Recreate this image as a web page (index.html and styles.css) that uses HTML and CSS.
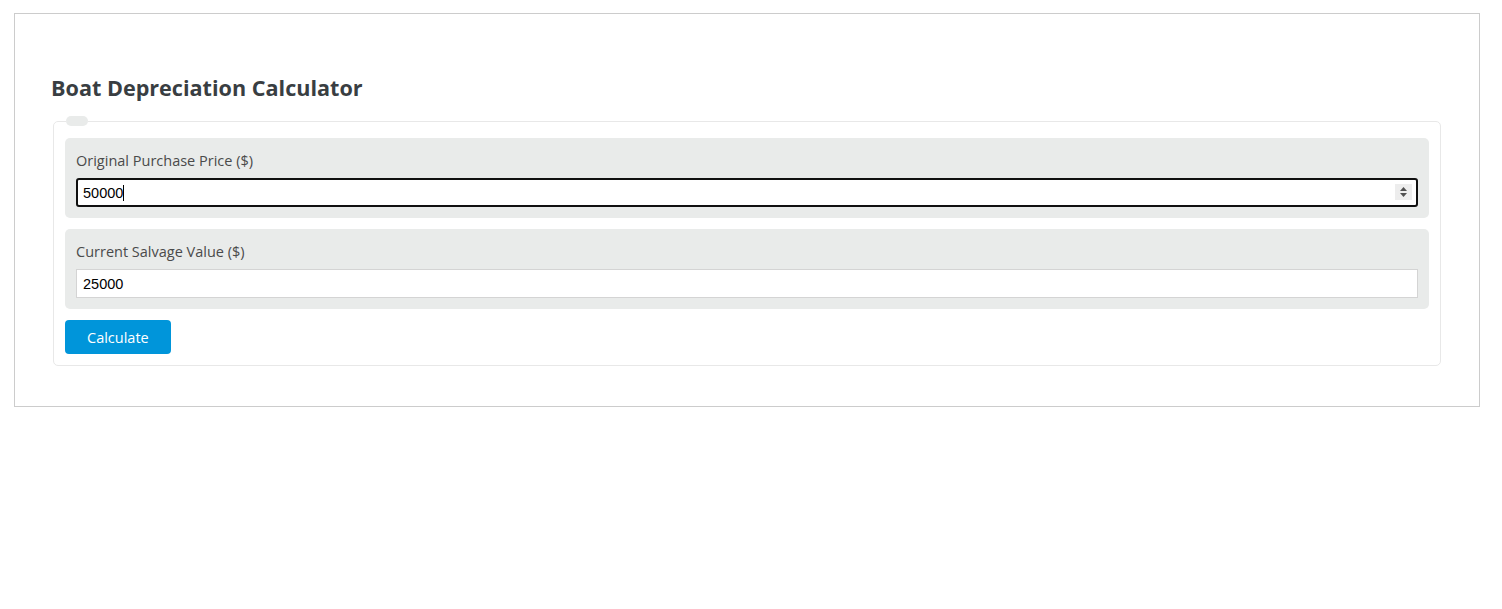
FILE: index.html
```html
<!DOCTYPE html>
<html lang="en">

<head>
    <meta charset="UTF-8">
    <meta name="viewport" content="width=device-width, initial-scale=1.0">
    <title>Boat Depreciation Calculator</title>
    <link rel="stylesheet" href="styles.css">
</head>

<body>
    <div class="calc-box">
        <h2 class="calc-title">Boat Depreciation Calculator</h2>

        <fieldset class="calc-form">
            <legend></legend>

            <div class="field">
                <label for="price">Original Purchase Price ($)</label>
                <div class="input-wrap">
                    <input id="price" class="active" type="text" value="50000">
                    <span class="caret"></span>
                    <span class="spinner">
                        <svg width="17" height="16" viewBox="0 0 17 16">
                            <rect width="17" height="16" fill="#ededed"/>
                            <path d="M5 7 L8.5 3 L12 7 Z" fill="#505050"/>
                            <path d="M5 9 L8.5 13 L12 9 Z" fill="#505050"/>
                        </svg>
                    </span>
                </div>
            </div>

            <div class="field">
                <label for="salvage">Current Salvage Value ($)</label>
                <div class="input-wrap">
                    <input id="salvage" type="text" value="25000">
                </div>
            </div>

            <button class="calc-btn" type="button">Calculate</button>
        </fieldset>
    </div>
</body>

</html>
```

FILE: styles.css
```css
body {
    margin: 13px 22px 0 14px;
    font-family: "Open Sans", "Noto Sans", sans-serif;
    color: #3a3f44;
}

.calc-box {
    border: 1px solid #cccccc;
    padding: 36px 36px 40px;
}

.calc-title {
    margin: 25px 0 15px;
    font-size: 21.6px;
    line-height: 26px;
    font-weight: 700;
    color: #393e42;
}

.calc-form {
    margin: 0 2px;
    padding: 12px 11px 11px;
    border: 1px solid #e8e8e8;
    border-radius: 5px;
    display: flex;
    flex-direction: column;
    gap: 11px;
}

.calc-form legend {
    width: 22px;
    height: 10px;
    padding: 0;
    margin-left: 1px;
    background: #e9ebea;
    border-radius: 5px;
}

.field {
    background: #e9ebea;
    border-radius: 5px;
    padding: 13px 11px 11px;
}

.field label {
    display: block;
    font-size: 14.5px;
    line-height: 20px;
    margin-bottom: 7px;
    color: #4a4a4a;
}

.input-wrap {
    position: relative;
}

.input-wrap input {
    display: block;
    box-sizing: border-box;
    width: 100%;
    height: 29px;
    margin: 0;
    padding: 0 6px;
    border: 1px solid #d4d4d4;
    border-radius: 0;
    background: #ffffff;
    font-family: "Liberation Sans", Arial, sans-serif;
    font-size: 14.5px;
    color: #000000;
    outline: none;
}

.input-wrap input.active {
    border: 2px solid #101010;
    border-radius: 3px;
    padding: 0 5px;
}

.caret {
    position: absolute;
    left: 47px;
    top: 7px;
    width: 1px;
    height: 16px;
    background: #000000;
}

.spinner {
    position: absolute;
    right: 6px;
    top: 6px;
    display: flex;
}

.calc-btn {
    align-self: flex-start;
    height: 34px;
    padding: 0 22px;
    border: none;
    border-radius: 4px;
    background: #0095da;
    color: #ffffff;
    font-family: "Open Sans", "Noto Sans", sans-serif;
    font-size: 14.5px;
}
```
